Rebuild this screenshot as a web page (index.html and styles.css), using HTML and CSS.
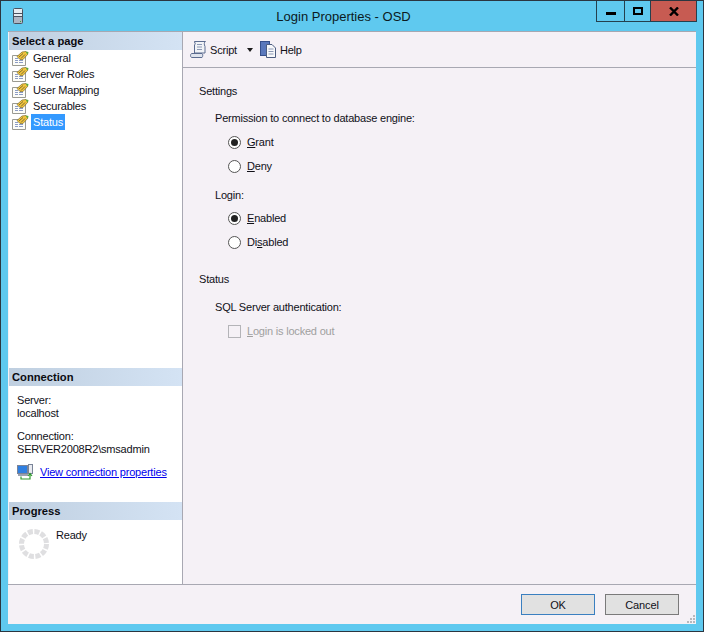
FILE: index.html
```html
<!DOCTYPE html>
<html lang="en">
<head>
<meta charset="utf-8">
<title>Login Properties - OSD</title>
<link rel="stylesheet" href="styles.css">
</head>
<body>
<svg class="defs" width="0" height="0" aria-hidden="true">
  <symbol id="page" viewBox="0 0 17 15">
    <path d="M.5 4.500H13.500V14.500H.5Z" fill="#fdfdf8" stroke="#9a9a92"/>
    <path d="M3 7.500H6M7 7.500H11M3 9.500H6M7 9.500H11M3 11.500H6M7 11.500H11" stroke="#8c9cc4"/>
    <path d="M5 5.500 10 1 14 .5 16 3 11 8.500 8 8.500Z" fill="#f4c63c" stroke="#7a6a2c" stroke-width=".7"/>
    <path d="M7 6 11 2.500M9 7.500 13 3.500" stroke="#5a5230" stroke-width=".8"/>
    <path d="M14 .5 16.500 1 16 3 14.500 2.500Z" fill="#5aa83c"/>
  </symbol>
</svg>
<div class="window">
  <header class="titlebar">
    <svg class="app-icon" width="10" height="16" viewBox="0 0 10 16">
      <rect x=".5" y=".5" width="9" height="15" rx="1" fill="#e6ecf2" stroke="#4a5260"/>
      <path d="M1 5.500H9M1 8.500H9" stroke="#4a5260"/>
      <rect x="1" y="9" width="8" height="6" fill="#aeb6c4"/>
      <rect x="7" y="13" width="1" height="1" fill="#3aa83a"/>
    </svg>
    <h1 class="title">Login Properties - OSD</h1>
    <div class="controls">
      <div class="ctl ctl-min"><span class="min-glyph"></span></div>
      <div class="ctl ctl-max"><span class="max-glyph"></span></div>
      <div class="ctl ctl-close">
        <svg width="10" height="9" viewBox="0 0 10 9"><path d="M1 .5 9 8.500M9 .5 1 8.500" stroke="#000" stroke-width="2.400"/></svg>
      </div>
    </div>
  </header>
  <div class="client">
    <div class="main">
      <aside class="sidebar">
        <section class="side-pages">
          <h2 class="side-head">Select a page</h2>
          <ul class="pages">
            <li class="page"><svg class="page-icon"><use href="#page"/></svg><span class="page-label">General</span></li>
            <li class="page"><svg class="page-icon"><use href="#page"/></svg><span class="page-label">Server Roles</span></li>
            <li class="page"><svg class="page-icon"><use href="#page"/></svg><span class="page-label">User Mapping</span></li>
            <li class="page"><svg class="page-icon"><use href="#page"/></svg><span class="page-label">Securables</span></li>
            <li class="page"><svg class="page-icon"><use href="#page"/></svg><span class="page-label selected">Status</span></li>
          </ul>
        </section>
        <section class="side-conn">
          <h2 class="side-head">Connection</h2>
          <div class="conn-body">
            <p class="conn-text">Server:<br>localhost</p>
            <p class="conn-text">Connection:<br>SERVER2008R2\smsadmin</p>
            <div class="conn-link">
              <svg width="17" height="16" viewBox="0 0 17 16">
                <rect x=".5" y="1.500" width="10" height="8" fill="#2f7fe0" stroke="#7a8498"/>
                <rect x="11.500" y=".5" width="4" height="9" fill="#e8eaf0" stroke="#7a8498"/>
                <path d="M1 11H11" stroke="#9aa0b0" stroke-width="2"/>
                <path d="M4 12.500V15H13V10M11 12 13 9.500 15 12" fill="none" stroke="#2f9a2f" stroke-width="1.200"/>
              </svg>
              <a class="link" href="#">View connection properties</a>
            </div>
          </div>
        </section>
        <section class="side-progress">
          <h2 class="side-head">Progress</h2>
          <div class="progress-body">
            <svg class="spinner" width="32" height="32" viewBox="0 0 32 32">
              <circle cx="16" cy="16" r="12.500" fill="none" stroke="#dfdfe1" stroke-width="5" stroke-dasharray="5 1.545"/>
            </svg>
            <span class="ready">Ready</span>
          </div>
        </section>
      </aside>
      <main class="content">
        <div class="toolbar">
          <div class="tool">
            <svg width="17" height="17" viewBox="0 0 17 17">
              <path d="M5 .5H15.500C14 1 14 3.500 15 5.500V12H4.500V4C5.500 3 5.500 1 4 1Z" fill="#f1f3f7" stroke="#5c6c90"/>
              <path d="M1.500 12.500H12C13 13 13 15.500 12 16.500H1.500C.2 15.500 .2 13.500 1.500 12.500Z" fill="#dfe4ee" stroke="#5c6c90"/>
              <path d="M7 3.500H12M7 6H12M7 8.500H12" stroke="#8c98b4"/>
            </svg>
            <span>Script</span>
          </div>
          <span class="caret"></span>
          <div class="tool tool-help">
            <svg width="17" height="17" viewBox="0 0 17 17">
              <rect x=".5" y=".5" width="9" height="14" fill="#5a78bc" stroke="#37508c"/>
              <path d="M6.500 3.500H12L15.500 7V16.500H6.500Z" fill="#f8f9fb" stroke="#4c5c80"/>
              <path d="M8.500 8H13.500M8.500 10.500H13.500M8.500 13H13.500" stroke="#8c98b4"/>
            </svg>
            <span>Help</span>
          </div>
        </div>
        <div class="form">
          <h3 class="group-title">Settings</h3>
          <div class="field-label first">Permission to connect to database engine:</div>
          <div class="option"><span class="radio on"></span><span><u>G</u>rant</span></div>
          <div class="option"><span class="radio"></span><span><u>D</u>eny</span></div>
          <div class="field-label login">Login:</div>
          <div class="option"><span class="radio on"></span><span><u>E</u>nabled</span></div>
          <div class="option"><span class="radio"></span><span>Di<u>s</u>abled</span></div>
          <h3 class="group-title status">Status</h3>
          <div class="field-label auth">SQL Server authentication:</div>
          <div class="option disabled"><span class="check"></span><span><u>L</u>ogin is locked out</span></div>
        </div>
      </main>
    </div>
    <footer class="footer">
      <button class="btn btn-default" type="button">OK</button>
      <button class="btn" type="button">Cancel</button>
      <svg class="grip" width="8" height="8" viewBox="0 0 8 8"><path d="M6 0h2v2H6zM3 3h2v2H3zM6 3h2v2H6zM0 6h2v2H0zM3 6h2v2H3zM6 6h2v2H6z" fill="#b8b8bc"/></svg>
    </footer>
  </div>
</div>
</body>
</html>
```

FILE: styles.css
```css
* { box-sizing: border-box; }
html, body { margin: 0; padding: 0; }
body { font: 11px/16px "Liberation Sans", Arial, sans-serif; letter-spacing: -0.2px; color: #101018; background: #5fc9ef; overflow: hidden; }
.defs { position: absolute; }
.window { width: 704px; height: 632px; display: flex; flex-direction: column; background: #5fc9ef; border: 1px solid #2b3640; padding: 0 7px 7px 7px; }
.titlebar { height: 30px; display: flex; align-items: flex-start; flex: none; }
.app-icon { margin: 7px 0 0 5px; flex: none; }
.title { flex: 1; margin: 7px 0 0; padding-left: 68px; text-align: center; font-size: 13px; letter-spacing: 0; line-height: 17px; font-weight: 400; color: #0b1a22; }
.controls { display: flex; height: 21px; flex: none; margin-right: -1px; border: 1px solid #24404e; border-top: 0; }
.ctl { height: 20px; display: flex; align-items: center; justify-content: center; }
.ctl-min { width: 28px; border-right: 1px solid #24404e; }
.ctl-max { width: 26px; border-right: 1px solid #24404e; }
.ctl-close { width: 45px; background: #c75b52; }
.min-glyph { width: 10px; height: 3px; background: #000; margin-top: 4px; }
.max-glyph { width: 10px; height: 8px; border: 2px solid #000; }
.client { flex: 1; display: flex; flex-direction: column; background: #f5f1f6; border-top: 1px solid #a6a8b2; min-height: 0; }
.main { flex: 1; display: flex; min-height: 0; border-bottom: 1px solid #a8a8b2; }
.sidebar { width: 174px; flex: none; display: flex; flex-direction: column; background: #fff; margin-left: 1px; border-right: 1px solid #a8a8b2; }
.side-pages { height: 336px; flex: none; }
.side-conn { height: 134px; flex: none; }
.side-progress { flex: 1; }
.side-head { margin: 0; height: 18px; padding-left: 3px; font-size: 11.200px; letter-spacing: 0; line-height: 18px; font-weight: 700; color: #0a0a10; background: linear-gradient(90deg, #bfcfe0, #d4e3f4); }
.pages { list-style: none; margin: 0; padding: 0; }
.page { height: 16px; display: flex; align-items: center; padding-left: 3px; }
.page-icon { width: 17px; height: 15px; flex: none; }
.page-label { margin-left: 2px; padding: 0 2px; line-height: 16px; }
.selected { background: #3399ff; color: #fff; }
.conn-body { padding: 8px 0 0 8px; }
.conn-text { margin: 0 0 10px; line-height: 13px; }
.conn-link { display: flex; align-items: center; margin-top: -2px; }
.link { margin-left: 6px; color: #0000ee; text-decoration: underline; }
.progress-body { display: flex; align-items: flex-start; padding: 7px 0 0 8px; }
.spinner { margin: 1px 0 0 1px; flex: none; }
.ready { margin-left: 6px; }
.content { flex: 1; min-width: 0; }
.toolbar { height: 36px; display: flex; align-items: center; padding-left: 7px; border-bottom: 1px solid #a8a8b2; }
.tool { display: flex; align-items: center; gap: 3px; }
.caret { width: 0; height: 0; border-style: solid; border-color: #1a1a1a transparent transparent; border-width: 4px 3.500px 0; margin-left: 10px; }
.tool-help { margin-left: 7px; }
.form { padding: 15px 0 0 16px; }
.group-title { margin: 0; font-size: 11px; font-weight: 400; line-height: 16px; }
.field-label { margin-left: 16px; line-height: 16px; }
.first { margin-top: 11px; }
.login { margin-top: 9px; }
.option { display: flex; align-items: center; height: 24px; margin-left: 29px; gap: 6px; }
.first + .option { margin-top: 4px; }
.login + .option { margin-top: 3px; }
.status { margin-top: 17px; }
.auth { margin-top: 12px; }
.auth + .option { margin-top: 4px; }
.radio { width: 13px; height: 13px; border-radius: 50%; border: 1px solid #555; background: #fff; display: flex; align-items: center; justify-content: center; flex: none; }
.radio.on::after { content: ""; width: 7px; height: 7px; border-radius: 50%; background: #222; }
.check { width: 13px; height: 13px; border: 1px solid #b4b4b8; background: #f5f1f6; flex: none; }
.disabled { color: #a0a0a0; }
.footer { height: 39px; flex: none; position: relative; display: flex; justify-content: flex-end; gap: 10px; padding: 9px 17px 0 0; }
.btn { width: 74px; height: 21px; padding: 0; font: 11px/16px "Liberation Sans", Arial, sans-serif; letter-spacing: -0.1px; color: #101018; background: #e1e1e1; border: 1px solid #7a7a7a; }
.btn-default { border: 1px solid #3a7fc0; }
.grip { position: absolute; right: 1px; bottom: 1px; }
```
